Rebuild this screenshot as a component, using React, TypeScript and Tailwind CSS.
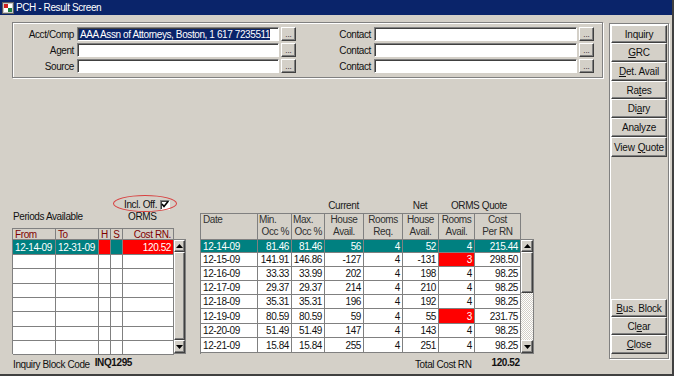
import React from "react";

const raised =
  "bg-[#d4d0c8] border border-t-white border-l-white border-b-[#404040] border-r-[#404040] shadow-[inset_-1px_-1px_0_#808080]";
const sunken =
  "bg-white border border-t-[#808080] border-l-[#808080] border-b-white border-r-white shadow-[inset_1px_1px_0_#404040]";

type Row = {
  d: string;
  min: string;
  max: string;
  cur: string;
  req: string;
  net: string;
  avail: string;
  cost: string;
  sel?: boolean;
  low?: boolean;
};

const rows: Row[] = [
  { d: "12-14-09", min: "81.46", max: "81.46", cur: "56", req: "4", net: "52", avail: "4", cost: "215.44", sel: true },
  { d: "12-15-09", min: "141.91", max: "146.86", cur: "-127", req: "4", net: "-131", avail: "3", cost: "298.50", low: true },
  { d: "12-16-09", min: "33.33", max: "33.99", cur: "202", req: "4", net: "198", avail: "4", cost: "98.25" },
  { d: "12-17-09", min: "29.37", max: "29.37", cur: "214", req: "4", net: "210", avail: "4", cost: "98.25" },
  { d: "12-18-09", min: "35.31", max: "35.31", cur: "196", req: "4", net: "192", avail: "4", cost: "98.25" },
  { d: "12-19-09", min: "80.59", max: "80.59", cur: "59", req: "4", net: "55", avail: "3", cost: "231.75", low: true },
  { d: "12-20-09", min: "51.49", max: "51.49", cur: "147", req: "4", net: "143", avail: "4", cost: "98.25" },
  { d: "12-21-09", min: "15.84", max: "15.84", cur: "255", req: "4", net: "251", avail: "4", cost: "98.25" },
];

const mainRowH = ["h-[13px]", "h-[14px]", "h-[14px]", "h-[14px]", "h-[14px]", "h-[15px]", "h-[14px]", "h-[15px]"];
const periodRowH = ["h-[15px]", "h-[14px]", "h-[15px]", "h-[14px]", "h-[14px]", "h-[15px]", "h-[14px]", "h-[14px]"];

const cell = "border-r border-b border-[#808080] flex items-center";

const Dots = () => (
  <div className={`${raised} w-[15px] h-[14px] flex items-end justify-center pb-[1px] text-[8px] leading-none tracking-normal`}>
    ...
  </div>
);

const Field = ({ label, lw, iw, children }: { label: string; lw: string; iw: string; children?: React.ReactNode }) => (
  <div className="flex items-center h-[14px]">
    <span className={`${lw} text-right`}>{label}</span>
    <div className={`${sunken} ${iw} h-[14px] ml-[3px] mr-[2px] flex items-center pl-[1px] overflow-hidden whitespace-nowrap`}>
      {children}
    </div>
    <Dots />
  </div>
);

const Arrow = ({ up }: { up?: boolean }) => (
  <svg width="7" height="4" viewBox="0 0 7 4">
    <polygon points={up ? "3.5,0 7,4 0,4" : "0,0 7,0 3.5,4"} fill="#000" />
  </svg>
);

const Scrollbar = ({ w, thumb }: { w: string; thumb?: string }) => (
  <div className={`${w} flex flex-col h-full border-t border-r border-b border-[#808080]`}>
    <div className={`${raised} h-[12px] flex items-center justify-center`}>
      <Arrow up />
    </div>
    {thumb ? (
      <>
        <div className={`${raised} ${thumb}`} />
        <div className="flex-1 bg-[repeating-conic-gradient(#ffffff_0%_25%,#d4d0c8_0%_50%)] bg-[length:2px_2px]" />
      </>
    ) : (
      <div className={`${raised} flex-1`} />
    )}
    <div className={`${raised} h-[13px] flex items-center justify-center`}>
      <Arrow />
    </div>
  </div>
);

const PanelButton = ({ h, children }: { h: string; children: React.ReactNode }) => (
  <div className={`${raised} ${h} w-[56px] flex items-center justify-center`}>{children}</div>
);

const U = ({ children }: { children: React.ReactNode }) => <span className="underline underline-offset-1">{children}</span>;

const App = () => {
  return (
    <div className="w-[674px] h-[376px] flex flex-col bg-[#d4d0c8] border-r-2 border-b-2 border-[#404040] font-['Liberation_Sans',Arial,sans-serif] text-[10px] tracking-[-0.4px] text-[#111] overflow-hidden">
      {/* title bar */}
      <div className="h-[15px] bg-[#0a246a] flex items-center shrink-0">
        <svg className="ml-[2px]" width="12" height="12" viewBox="0 0 12 12">
          <rect x="0.5" y="0.5" width="11" height="11" fill="#c8c8c8" stroke="#606060" />
          <rect x="2" y="2" width="4" height="4" fill="#d02020" />
          <rect x="6" y="2" width="4" height="4" fill="#ffffff" />
          <rect x="2" y="6" width="4" height="4" fill="#ffffff" />
          <rect x="6" y="6" width="4" height="4" fill="#208040" />
        </svg>
        <span className="ml-[2px] text-white">PCH - Result Screen</span>
      </div>

      <div className="flex flex-1">
        <div className="w-[609px] flex flex-col">
          {/* top group */}
          <div className="ml-[12px] mt-[7px] w-[591px] h-[56px] border border-[#808080] shadow-[1px_1px_0_#ffffff,inset_1px_1px_0_#ffffff] pt-[4px] flex">
            <div className="flex flex-col gap-[2px]">
              <Field label="Acct/Comp" lw="w-[61px]" iw="w-[202px]">
                <span className="bg-[#0a246a] text-white leading-[11px] pl-[1px]">AAA Assn of Attorneys, Boston, 1 617 7235511</span>
              </Field>
              <Field label="Agent" lw="w-[61px]" iw="w-[202px]" />
              <Field label="Source" lw="w-[61px]" iw="w-[202px]" />
            </div>
            <div className="flex flex-col gap-[2px]">
              <Field label="Contact" lw="w-[75px]" iw="w-[203px]" />
              <Field label="Contact" lw="w-[75px]" iw="w-[203px]" />
              <Field label="Contact" lw="w-[75px]" iw="w-[203px]" />
            </div>
          </div>

          {/* lower area */}
          <div className="flex mt-[121px]">
            {/* periods */}
            <div className="ml-[12px] w-[174px] flex flex-col relative">
              <div className="h-[11px] flex items-center pl-[112px]">
                <span>Incl. Off.</span>
                <div className={`${sunken} ml-[3px] w-[10px] h-[10px] flex items-center justify-center`}>
                  <svg width="8" height="7" viewBox="0 0 8 7">
                    <polyline points="1,3 3,5.5 7,0.5" fill="none" stroke="#000" strokeWidth="1.6" />
                  </svg>
                </div>
              </div>
              <div className="absolute left-[101px] top-[-4px] w-[64px] h-[17px] rounded-[50%] border-[1.5px] border-[#d84040]" />
              <div className="h-[12px] flex items-center">
                <span className="w-[116px] pl-[1px]">Periods Available</span>
                <span>ORMS</span>
              </div>
              <div className="mt-[6px] flex h-[126px]">
                <div className="w-[162px] border-l border-t border-[#808080]">
                  <div className="flex h-[11px] text-[#800000]">
                    <div className={`${cell} w-[43px] pl-[2px]`}>From</div>
                    <div className={`${cell} w-[43px] pl-[2px]`}>To</div>
                    <div className={`${cell} w-[12px] justify-center`}>H</div>
                    <div className={`${cell} w-[12px] justify-center`}>S</div>
                    <div className={`${cell} w-[51px] justify-end pr-[2px]`}>Cost RN.</div>
                  </div>
                  {periodRowH.map((h, i) =>
                    i === 0 ? (
                      <div key={i} className={`flex ${h} text-white`}>
                        <div className={`${cell} w-[43px] pl-[2px] bg-[#008080]`}>12-14-09</div>
                        <div className={`${cell} w-[43px] pl-[2px] bg-[#008080]`}>12-31-09</div>
                        <div className={`${cell} w-[12px] bg-[#ff0000]`} />
                        <div className={`${cell} w-[12px] bg-[#008080]`} />
                        <div className={`${cell} w-[51px] justify-end pr-[2px] bg-[#ff0000]`}>120.52</div>
                      </div>
                    ) : (
                      <div key={i} className={`flex ${h} bg-white`}>
                        <div className={`${cell} w-[43px]`} />
                        <div className={`${cell} w-[43px]`} />
                        <div className={`${cell} w-[12px]`} />
                        <div className={`${cell} w-[12px]`} />
                        <div className={`${cell} w-[51px]`} />
                      </div>
                    )
                  )}
                </div>
                <div className="flex flex-col">
                  <div className="h-[11px] shrink-0" />
                  <div className="flex-1">
                    <Scrollbar w="w-[12px]" />
                  </div>
                </div>
              </div>
              <div className="mt-[4px] h-[12px] flex items-center pl-[1px]">
                <span>Inquiry Block Code</span>
                <span className="ml-[5px] font-bold -mt-[3px]">INQ1295</span>
              </div>
            </div>

            {/* main table */}
            <div className="ml-[14px] flex flex-col">
              <div className="h-[12px] flex items-center text-[#202020]">
                <span className="w-[124px]" />
                <span className="w-[39px] text-center">Current</span>
                <span className="w-[39px]" />
                <span className="w-[36px] text-center">Net</span>
                <span className="w-[82px] text-center">ORMS Quote</span>
              </div>
              <div className="mt-[2px] flex h-[141px]">
                <div className="w-[321px] border-l border-t border-[#808080]">
                  <div className="flex h-[26px] text-[#303030] leading-[12px]">
                    <div className={`${cell} w-[57px] items-start pl-[2px]`}>Date</div>
                    <div className={`${cell} w-[34px] flex-col items-stretch pl-[1px] pr-[2px]`}>
                      <span>Min.</span>
                      <span className="text-right">Occ %</span>
                    </div>
                    <div className={`${cell} w-[33px] flex-col items-stretch pl-[1px] pr-[2px]`}>
                      <span>Max.</span>
                      <span className="text-right">Occ %</span>
                    </div>
                    <div className={`${cell} w-[39px] flex-col`}>
                      <span>House</span>
                      <span>Avail.</span>
                    </div>
                    <div className={`${cell} w-[39px] flex-col`}>
                      <span>Rooms</span>
                      <span>Req.</span>
                    </div>
                    <div className={`${cell} w-[36px] flex-col`}>
                      <span>House</span>
                      <span>Avail.</span>
                    </div>
                    <div className={`${cell} w-[36px] flex-col`}>
                      <span>Rooms</span>
                      <span>Avail.</span>
                    </div>
                    <div className={`${cell} w-[46px] flex-col`}>
                      <span>Cost</span>
                      <span>Per RN</span>
                    </div>
                  </div>
                  {rows.map((r, i) => (
                    <div key={r.d} className={`flex ${mainRowH[i]} ${r.sel ? "bg-[#008080] text-white" : "bg-white"}`}>
                      <div className={`${cell} w-[57px] pl-[2px]`}>{r.d}</div>
                      <div className={`${cell} w-[34px] justify-end pr-[2px]`}>{r.min}</div>
                      <div className={`${cell} w-[33px] justify-end pr-[2px]`}>{r.max}</div>
                      <div className={`${cell} w-[39px] justify-end pr-[2px]`}>{r.cur}</div>
                      <div className={`${cell} w-[39px] justify-end pr-[2px]`}>{r.req}</div>
                      <div className={`${cell} w-[36px] justify-end pr-[2px]`}>{r.net}</div>
                      <div className={`${cell} w-[36px] justify-end pr-[2px] ${r.low ? "bg-[#ff0000] text-white" : ""}`}>{r.avail}</div>
                      <div className={`${cell} w-[46px] justify-end pr-[2px]`}>{r.cost}</div>
                    </div>
                  ))}
                </div>
                <div className="flex flex-col">
                  <div className="h-[26px] shrink-0" />
                  <div className="flex-1">
                    <Scrollbar w="w-[13px]" thumb="h-[41px]" />
                  </div>
                </div>
              </div>
              <div className="mt-[4px] h-[12px] flex items-center">
                <span className="ml-[215px]">Total Cost RN</span>
                <span className="ml-[20px] font-bold -mt-[3px]">120.52</span>
              </div>
            </div>
          </div>
        </div>

        {/* right button panel */}
        <div className="mt-[8px] w-[60px] h-[336px] border border-[#808080] shadow-[1px_1px_0_#ffffff,inset_1px_1px_0_#ffffff] pl-[1px] pt-[1px] pb-[4px] flex flex-col tracking-[-0.2px]">
          <PanelButton h="h-[18px]">Inquiry</PanelButton>
          <PanelButton h="h-[19px]">
            <U>G</U>RC
          </PanelButton>
          <PanelButton h="h-[19px]">
            <U>D</U>et. Avail
          </PanelButton>
          <PanelButton h="h-[18px]">
            Ra<U>t</U>es
          </PanelButton>
          <PanelButton h="h-[19px]">
            Di<U>a</U>ry
          </PanelButton>
          <PanelButton h="h-[19px]">Analyze</PanelButton>
          <PanelButton h="h-[20px]">
            View<span className="ml-[3px]" />
            <U>Q</U>uote
          </PanelButton>
          <div className="flex-1" />
          <PanelButton h="h-[18px]">
            <U>B</U>us. Block
          </PanelButton>
          <PanelButton h="h-[18px]">
            Cl<U>e</U>ar
          </PanelButton>
          <PanelButton h="h-[19px]">
            <U>C</U>lose
          </PanelButton>
        </div>
      </div>
    </div>
  );
};

export default App;
